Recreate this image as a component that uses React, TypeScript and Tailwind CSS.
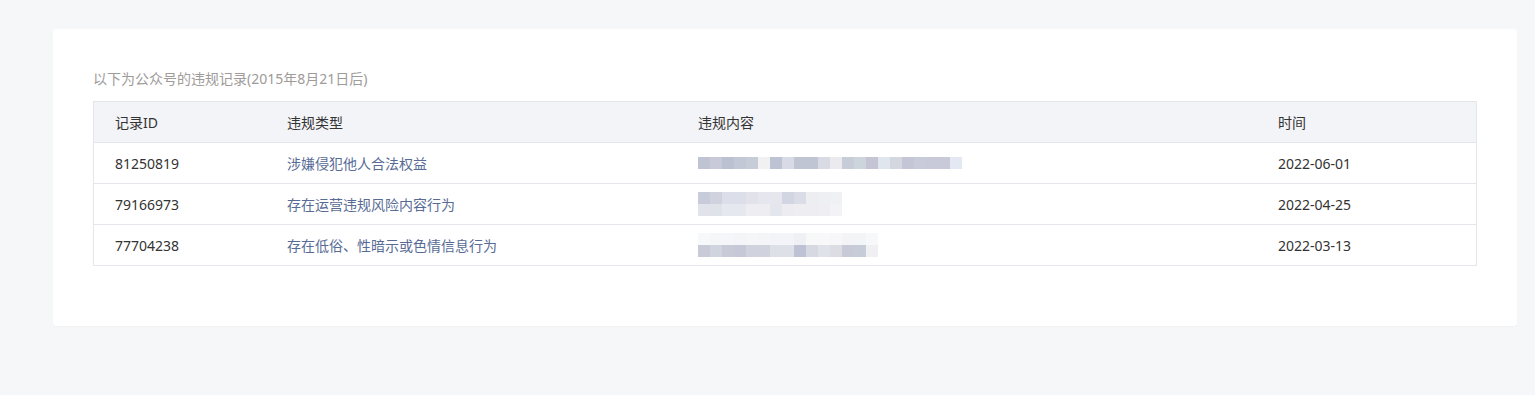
const rows = [
  {
    id: "81250819",
    type: "涉嫌侵犯他人合法权益",
    time: "2022-06-01",
    bands: [
      [
        "bg-[#c0c3d2]", "bg-[#c8cada]", "bg-[#bbc1d1]", "bg-[#c3c8d6]", "bg-[#c6cdd8]", "bg-[#f1f1f1]",
        "bg-[#bdc3d3]", "bg-[#d8dbe5]", "bg-[#c0c5d4]", "bg-[#c0c5d4]", "bg-[#d9dbe4]", "bg-[#ebebef]",
        "bg-[#c8ccd8]", "bg-[#ccd4dc]", "bg-[#c4c4d4]", "bg-[#e0e6ee]", "bg-[#d4d6e0]", "bg-[#c4c6d6]",
        "bg-[#c8ccda]", "bg-[#c8cada]", "bg-[#c8cada]", "bg-[#e4e8f2]",
      ],
    ],
  },
  {
    id: "79166973",
    type: "存在运营违规风险内容行为",
    time: "2022-04-25",
    bands: [
      [
        "bg-[#c8ccda]", "bg-[#d0d3de]", "bg-[#dcdfe9]", "bg-[#dcdfe9]", "bg-[#e2e3ea]", "bg-[#e6e7ee]",
        "bg-[#e6e7ee]", "bg-[#d2d6e2]", "bg-[#dadce6]", "bg-[#eceef2]", "bg-[#eeeff3]", "bg-[#f0f1f4]",
      ],
      [
        "bg-[#e2e3ea]", "bg-[#e0e2ea]", "bg-[#e6e8f0]", "bg-[#e6e8f0]", "bg-[#eeeef2]", "bg-[#eeeef2]",
        "bg-[#e4e6ee]", "bg-[#ececf1]", "bg-[#ededf2]", "bg-[#ededf2]", "bg-[#efeff3]", "bg-[#f3f3f7]",
      ],
    ],
  },
  {
    id: "77704238",
    type: "存在低俗、性暗示或色情信息行为",
    time: "2022-03-13",
    bands: [
      [
        "bg-[#f7f8fa]", "bg-[#f5f6f9]", "bg-[#f5f6f9]", "bg-[#f4f5f8]", "bg-[#f6f6f8]", "bg-[#f4f5f8]",
        "bg-[#f3f4f7]", "bg-[#f3f4f7]", "bg-[#eef0f4]", "bg-[#f8f8f9]", "bg-[#f8f8fa]", "bg-[#f7f7f9]",
        "bg-[#f4f4f7]", "bg-[#f3f4f7]", "bg-[#f7f8fa]",
      ],
      [
        "bg-[#c8cad8]", "bg-[#d0d4de]", "bg-[#c8cad8]", "bg-[#c6c8d8]", "bg-[#d0d2de]", "bg-[#d0d2de]",
        "bg-[#dee0e8]", "bg-[#dee0e8]", "bg-[#bec2d4]", "bg-[#d6d8e2]", "bg-[#e0e2ea]", "bg-[#dcdce4]",
        "bg-[#c8cad8]", "bg-[#c6ccd8]", "bg-[#f0f0f2]",
      ],
    ],
  },
];

// blurred "违规内容" cells, drawn as pixel blocks
function Mosaic({ bands }: { bands: string[][] }) {
  return (
    <div className="flex flex-col">
      {bands.map((band, i) => (
        <div key={i} className="flex">
          {band.map((c, j) => (
            <div key={j} className={`h-[12px] w-[12px] ${c}`} />
          ))}
        </div>
      ))}
    </div>
  );
}

export default function App() {
  return (
    <div
      className="min-h-[395px] w-full bg-[#f6f7f9] pt-[29px] text-[14px] text-[#333]"
      style={{ fontFamily: '"Noto Sans", "Noto Sans CJK SC", sans-serif' }}
    >
      <div className="ml-[53px] w-[1464px] rounded-[4px] bg-white px-[40px] pt-[40px] pb-[60px] shadow-[0_1px_2px_rgba(0,0,0,0.03)]">
        <p className="mb-[12px] h-[20px] leading-[20px] text-[#9e9b99]">
          以下为公众号的违规记录(2015年8月21日后)
        </p>

        <div className="border border-[#e4e6eb]">
          <div className="flex h-[40px] items-center bg-[#f3f4f7]">
            <div className="w-[172px] pl-[21px]">记录ID</div>
            <div className="w-[411px] pl-[21px]">违规类型</div>
            <div className="w-[580px] pl-[21px]">违规内容</div>
            <div className="flex-1 pl-[21px]">时间</div>
          </div>

          {rows.map((r) => (
            <div key={r.id} className="flex h-[41px] items-center border-t border-[#e4e6eb]">
              <div className="w-[172px] pl-[21px]">{r.id}</div>
              <div className="w-[411px] pl-[21px] text-[#576b95]">{r.type}</div>
              <div className="w-[580px] pl-[21px]">
                <Mosaic bands={r.bands} />
              </div>
              <div className="flex-1 pl-[21px]">{r.time}</div>
            </div>
          ))}
        </div>
      </div>
    </div>
  );
}
